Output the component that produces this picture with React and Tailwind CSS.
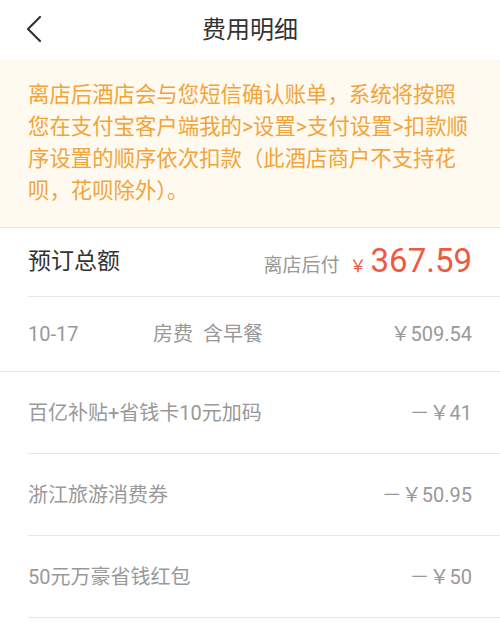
const font = { fontFamily: 'Roboto, "Noto Sans CJK SC", sans-serif' };

const discounts = [
  { label: '百亿补贴+省钱卡10元加码', amount: '41' },
  { label: '浙江旅游消费券', amount: '50.95' },
  { label: '50元万豪省钱红包', amount: '50' },
];

const App = () => {
  return (
    <div className="w-[500px] h-[624px] bg-white overflow-hidden" style={font}>
      {/* header */}
      <div className="relative h-[60px] flex items-center justify-center">
        <button className="absolute left-[20px] top-[14px]">
          <svg width="28" height="30" viewBox="0 0 28 30" fill="none">
            <path d="M20 3 L8 15 L20 27" stroke="#333" strokeWidth="2.2" strokeLinecap="round" strokeLinejoin="round" />
          </svg>
        </button>
        <h1 className="text-[24px] text-[#333] font-normal">费用明细</h1>
      </div>

      {/* notice */}
      <div className="bg-[#fffaf0] pl-[28px] pr-[24px] pt-[19px] pb-[20px] border-b border-[#e6e6e6]">
        <p className="text-[21.4px] leading-[32px] text-[#f2a43a]">
          离店后酒店会与您短信确认账单，系统将按照您在支付宝客户端我的&gt;设置&gt;支付设置&gt;扣款顺序设置的顺序依次扣款（此酒店商户不支持花呗，花呗除外）。
        </p>
      </div>

      {/* total */}
      <div className="pl-[28px]">
        <div className="h-[69px] flex items-center justify-between pr-[28px] border-b border-[#e6e6e6]">
          <span className="text-[23px] text-[#333]">预订总额</span>
          <div className="flex items-baseline">
            <span className="text-[19px] text-[#999] mr-[10px]">离店后付</span>
            <span className="text-[17px] text-[#ee5a3f] mr-[4px]">￥</span>
            <span className="text-[33px] leading-none text-[#ee5a3f]">367.59</span>
          </div>
        </div>
      </div>

      {/* room */}
      <div className="h-[75px] flex items-center pl-[28px] pr-[28px] border-b border-[#e6e6e6] text-[20px] text-[#999]">
        <span className="w-[125px]">10-17</span>
        <span className="flex-1">房费&nbsp;&nbsp;含早餐</span>
        <span>￥509.54</span>
      </div>

      {/* discounts */}
      <div className="pl-[28px]">
        {discounts.map((d) => (
          <div key={d.label} className="h-[82px] flex items-center justify-between pr-[28px] border-b border-[#e6e6e6] text-[20px] text-[#999]">
            <span>{d.label}</span>
            <span>－￥{d.amount}</span>
          </div>
        ))}
      </div>
    </div>
  );
};

export default App;
